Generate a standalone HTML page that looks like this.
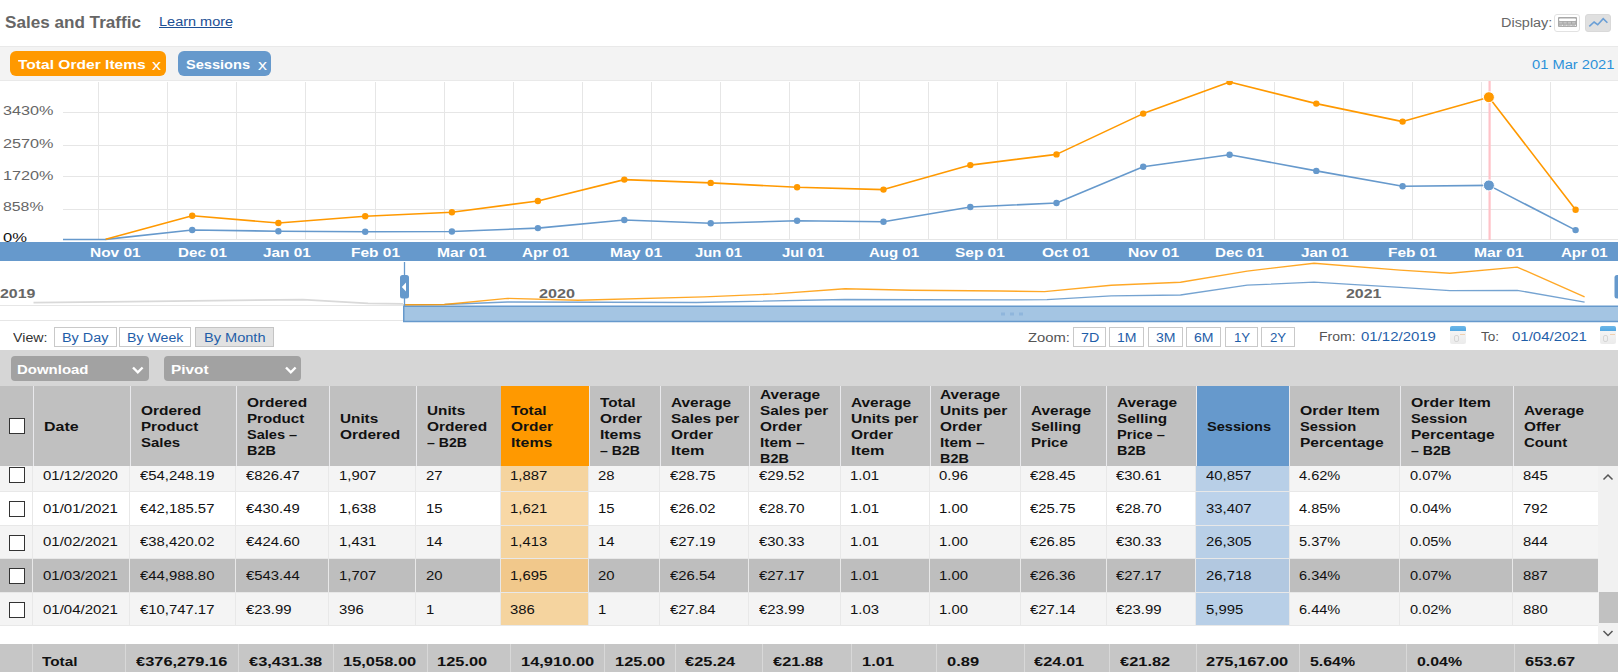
<!DOCTYPE html>
<html><head><meta charset="utf-8"><title>Sales and Traffic</title>
<style>
html,body{margin:0;padding:0;background:#fff;}
body{width:1618px;height:672px;position:relative;overflow:hidden;font-family:"Liberation Sans", sans-serif;}
.t span{position:absolute;white-space:pre;line-height:1;transform-origin:0 0;}
</style></head><body>
<div style="position:absolute;left:159px;top:27px;width:73px;height:1px;background:#1c4f94;"></div><div style="position:absolute;left:1554px;top:14px;width:24px;height:16px;border:1px solid #e2e2e2;border-radius:3px;background:#fff"></div><div style="position:absolute;left:1585px;top:14px;width:24px;height:16px;border:1px solid #d9d9d9;border-radius:3px;background:#e0e0e0"></div><div style="position:absolute;left:0px;top:46px;width:1618px;height:35px;background:#f3f3f3;border-top:1px solid #e9e9e9;border-bottom:1px solid #e9e9e9;box-sizing:border-box"></div><div style="position:absolute;left:10px;top:51px;width:156px;height:25px;background:#ff9900;border-radius:6px"></div><div style="position:absolute;left:178px;top:51px;width:93px;height:25px;background:#6699cc;border-radius:6px"></div><div style="position:absolute;left:0px;top:242px;width:1618px;height:19px;background:#6699cc;"></div><div style="position:absolute;left:54px;top:326.5px;width:60.5px;height:18px;border:1px solid #c9c9c9;background:#fff"></div><div style="position:absolute;left:119.2px;top:326.5px;width:70.3px;height:18px;border:1px solid #c9c9c9;background:#fff"></div><div style="position:absolute;left:195.2px;top:326.5px;width:76.5px;height:18px;border:1px solid #c4c4c4;background:#e2e2e2"></div><div style="position:absolute;left:1073px;top:326.5px;width:31.4px;height:18px;border:1px solid #c9c9c9;background:#fff"></div><div style="position:absolute;left:1109.2px;top:326.5px;width:33.2px;height:18px;border:1px solid #c9c9c9;background:#fff"></div><div style="position:absolute;left:1148.1px;top:326.5px;width:33.3px;height:18px;border:1px solid #c9c9c9;background:#fff"></div><div style="position:absolute;left:1186.2px;top:326.5px;width:33.2px;height:18px;border:1px solid #c9c9c9;background:#fff"></div><div style="position:absolute;left:1225.1px;top:326.5px;width:31.4px;height:18px;border:1px solid #c9c9c9;background:#fff"></div><div style="position:absolute;left:1261.3px;top:326.5px;width:31.3px;height:18px;border:1px solid #c9c9c9;background:#fff"></div><div style="position:absolute;left:1450px;top:326px;width:16px;height:17.5px;border-radius:2px;background:linear-gradient(#f8f8f8,#ebebeb)"></div><div style="position:absolute;left:1450px;top:326px;width:16px;height:5px;border-radius:2px 2px 0 0;background:linear-gradient(#6cb6e8,#52a8e2)"></div><div style="position:absolute;left:1453.5px;top:335px;width:3px;height:5px;border:1px solid #d6d6d6;border-radius:2px"></div><div style="position:absolute;left:1460px;top:334px;width:5px;height:1px;background:#f0d0b0"></div><div style="position:absolute;left:1599.7px;top:326px;width:16px;height:17.5px;border-radius:2px;background:linear-gradient(#f8f8f8,#ebebeb)"></div><div style="position:absolute;left:1599.7px;top:326px;width:16px;height:5px;border-radius:2px 2px 0 0;background:linear-gradient(#6cb6e8,#52a8e2)"></div><div style="position:absolute;left:1603.2px;top:335px;width:3px;height:5px;border:1px solid #d6d6d6;border-radius:2px"></div><div style="position:absolute;left:1609.7px;top:334px;width:5px;height:1px;background:#f0d0b0"></div><div style="position:absolute;left:0px;top:350px;width:1618px;height:36px;background:#d6d6d6;"></div><div style="position:absolute;left:11px;top:356px;width:138px;height:25px;background:#a2a2a2;border-radius:4px"></div><div style="position:absolute;left:164px;top:356px;width:137px;height:25px;background:#a2a2a2;border-radius:4px"></div><div style="position:absolute;left:0px;top:386px;width:1618px;height:80px;background:#c0c0c0;"></div><div style="position:absolute;left:33px;top:386px;width:1px;height:80px;background:#e9e9ec;"></div><div style="position:absolute;left:130px;top:386px;width:1px;height:80px;background:#e9e9ec;"></div><div style="position:absolute;left:236px;top:386px;width:1px;height:80px;background:#e9e9ec;"></div><div style="position:absolute;left:329px;top:386px;width:1px;height:80px;background:#e9e9ec;"></div><div style="position:absolute;left:416px;top:386px;width:1px;height:80px;background:#e9e9ec;"></div><div style="position:absolute;left:501px;top:386px;width:1px;height:80px;background:#e9e9ec;"></div><div style="position:absolute;left:589px;top:386px;width:1px;height:80px;background:#e9e9ec;"></div><div style="position:absolute;left:660px;top:386px;width:1px;height:80px;background:#e9e9ec;"></div><div style="position:absolute;left:749px;top:386px;width:1px;height:80px;background:#e9e9ec;"></div><div style="position:absolute;left:840px;top:386px;width:1px;height:80px;background:#e9e9ec;"></div><div style="position:absolute;left:930px;top:386px;width:1px;height:80px;background:#e9e9ec;"></div><div style="position:absolute;left:1020px;top:386px;width:1px;height:80px;background:#e9e9ec;"></div><div style="position:absolute;left:1106px;top:386px;width:1px;height:80px;background:#e9e9ec;"></div><div style="position:absolute;left:1196px;top:386px;width:1px;height:80px;background:#e9e9ec;"></div><div style="position:absolute;left:1289px;top:386px;width:1px;height:80px;background:#e9e9ec;"></div><div style="position:absolute;left:1400px;top:386px;width:1px;height:80px;background:#e9e9ec;"></div><div style="position:absolute;left:1513px;top:386px;width:1px;height:80px;background:#e9e9ec;"></div><div style="position:absolute;left:501px;top:386px;width:88px;height:80px;background:#ff9900;"></div><div style="position:absolute;left:1197px;top:386px;width:92px;height:80px;background:#6699cc;"></div><div style="position:absolute;left:9px;top:418px;width:14px;height:14px;border:1px solid #333;background:#fff"></div><div style="position:absolute;left:0px;top:466px;width:1598px;height:160px;background:#ffffff;"></div><div style="position:absolute;left:0px;top:466px;width:1598px;height:25px;background:#f4f4f4;"></div><div style="position:absolute;left:500px;top:466px;width:88px;height:25px;background:#f5d49f;"></div><div style="position:absolute;left:1196px;top:466px;width:93px;height:25px;background:#b8cfe7;"></div><div style="position:absolute;left:9px;top:467px;width:14px;height:14px;border:1px solid #333;background:#fff"></div><div style="position:absolute;left:0px;top:491px;width:1598px;height:34px;background:#ffffff;"></div><div style="position:absolute;left:500px;top:491px;width:88px;height:34px;background:#f8d8a6;"></div><div style="position:absolute;left:1196px;top:491px;width:93px;height:34px;background:#bcd2ea;"></div><div style="position:absolute;left:9px;top:501px;width:14px;height:14px;border:1px solid #333;background:#fff"></div><div style="position:absolute;left:0px;top:525px;width:1598px;height:33px;background:#f4f4f4;"></div><div style="position:absolute;left:500px;top:525px;width:88px;height:33px;background:#f5d49f;"></div><div style="position:absolute;left:1196px;top:525px;width:93px;height:33px;background:#b8cfe7;"></div><div style="position:absolute;left:9px;top:534.5px;width:14px;height:14px;border:1px solid #333;background:#fff"></div><div style="position:absolute;left:0px;top:558px;width:1598px;height:34px;background:#bebebe;"></div><div style="position:absolute;left:500px;top:558px;width:88px;height:34px;background:#f1c88b;"></div><div style="position:absolute;left:1196px;top:558px;width:93px;height:34px;background:#b2c8e0;"></div><div style="position:absolute;left:9px;top:568px;width:14px;height:14px;border:1px solid #333;background:#fff"></div><div style="position:absolute;left:0px;top:592px;width:1598px;height:33px;background:#f4f4f4;"></div><div style="position:absolute;left:500px;top:592px;width:88px;height:33px;background:#f5d49f;"></div><div style="position:absolute;left:1196px;top:592px;width:93px;height:33px;background:#b8cfe7;"></div><div style="position:absolute;left:9px;top:601.5px;width:14px;height:14px;border:1px solid #333;background:#fff"></div><div style="position:absolute;left:0px;top:491px;width:1598px;height:1px;background:#e8e8e8;"></div><div style="position:absolute;left:32px;top:466px;width:1px;height:25px;background:#e8e8e8;"></div><div style="position:absolute;left:129px;top:466px;width:1px;height:25px;background:#e8e8e8;"></div><div style="position:absolute;left:235px;top:466px;width:1px;height:25px;background:#e8e8e8;"></div><div style="position:absolute;left:328px;top:466px;width:1px;height:25px;background:#e8e8e8;"></div><div style="position:absolute;left:415px;top:466px;width:1px;height:25px;background:#e8e8e8;"></div><div style="position:absolute;left:500px;top:466px;width:1px;height:25px;background:#e8e8e8;"></div><div style="position:absolute;left:588px;top:466px;width:1px;height:25px;background:#e8e8e8;"></div><div style="position:absolute;left:659px;top:466px;width:1px;height:25px;background:#e8e8e8;"></div><div style="position:absolute;left:748px;top:466px;width:1px;height:25px;background:#e8e8e8;"></div><div style="position:absolute;left:840px;top:466px;width:1px;height:25px;background:#e8e8e8;"></div><div style="position:absolute;left:929px;top:466px;width:1px;height:25px;background:#e8e8e8;"></div><div style="position:absolute;left:1020px;top:466px;width:1px;height:25px;background:#e8e8e8;"></div><div style="position:absolute;left:1106px;top:466px;width:1px;height:25px;background:#e8e8e8;"></div><div style="position:absolute;left:1195px;top:466px;width:1px;height:25px;background:#e8e8e8;"></div><div style="position:absolute;left:1289px;top:466px;width:1px;height:25px;background:#e8e8e8;"></div><div style="position:absolute;left:1399px;top:466px;width:1px;height:25px;background:#e8e8e8;"></div><div style="position:absolute;left:1512px;top:466px;width:1px;height:25px;background:#e8e8e8;"></div><div style="position:absolute;left:0px;top:525px;width:1598px;height:1px;background:#e8e8e8;"></div><div style="position:absolute;left:32px;top:491px;width:1px;height:34px;background:#e8e8e8;"></div><div style="position:absolute;left:129px;top:491px;width:1px;height:34px;background:#e8e8e8;"></div><div style="position:absolute;left:235px;top:491px;width:1px;height:34px;background:#e8e8e8;"></div><div style="position:absolute;left:328px;top:491px;width:1px;height:34px;background:#e8e8e8;"></div><div style="position:absolute;left:415px;top:491px;width:1px;height:34px;background:#e8e8e8;"></div><div style="position:absolute;left:500px;top:491px;width:1px;height:34px;background:#e8e8e8;"></div><div style="position:absolute;left:588px;top:491px;width:1px;height:34px;background:#e8e8e8;"></div><div style="position:absolute;left:659px;top:491px;width:1px;height:34px;background:#e8e8e8;"></div><div style="position:absolute;left:748px;top:491px;width:1px;height:34px;background:#e8e8e8;"></div><div style="position:absolute;left:840px;top:491px;width:1px;height:34px;background:#e8e8e8;"></div><div style="position:absolute;left:929px;top:491px;width:1px;height:34px;background:#e8e8e8;"></div><div style="position:absolute;left:1020px;top:491px;width:1px;height:34px;background:#e8e8e8;"></div><div style="position:absolute;left:1106px;top:491px;width:1px;height:34px;background:#e8e8e8;"></div><div style="position:absolute;left:1195px;top:491px;width:1px;height:34px;background:#e8e8e8;"></div><div style="position:absolute;left:1289px;top:491px;width:1px;height:34px;background:#e8e8e8;"></div><div style="position:absolute;left:1399px;top:491px;width:1px;height:34px;background:#e8e8e8;"></div><div style="position:absolute;left:1512px;top:491px;width:1px;height:34px;background:#e8e8e8;"></div><div style="position:absolute;left:0px;top:558px;width:1598px;height:1px;background:#e8e8e8;"></div><div style="position:absolute;left:32px;top:525px;width:1px;height:33px;background:#e8e8e8;"></div><div style="position:absolute;left:129px;top:525px;width:1px;height:33px;background:#e8e8e8;"></div><div style="position:absolute;left:235px;top:525px;width:1px;height:33px;background:#e8e8e8;"></div><div style="position:absolute;left:328px;top:525px;width:1px;height:33px;background:#e8e8e8;"></div><div style="position:absolute;left:415px;top:525px;width:1px;height:33px;background:#e8e8e8;"></div><div style="position:absolute;left:500px;top:525px;width:1px;height:33px;background:#e8e8e8;"></div><div style="position:absolute;left:588px;top:525px;width:1px;height:33px;background:#e8e8e8;"></div><div style="position:absolute;left:659px;top:525px;width:1px;height:33px;background:#e8e8e8;"></div><div style="position:absolute;left:748px;top:525px;width:1px;height:33px;background:#e8e8e8;"></div><div style="position:absolute;left:840px;top:525px;width:1px;height:33px;background:#e8e8e8;"></div><div style="position:absolute;left:929px;top:525px;width:1px;height:33px;background:#e8e8e8;"></div><div style="position:absolute;left:1020px;top:525px;width:1px;height:33px;background:#e8e8e8;"></div><div style="position:absolute;left:1106px;top:525px;width:1px;height:33px;background:#e8e8e8;"></div><div style="position:absolute;left:1195px;top:525px;width:1px;height:33px;background:#e8e8e8;"></div><div style="position:absolute;left:1289px;top:525px;width:1px;height:33px;background:#e8e8e8;"></div><div style="position:absolute;left:1399px;top:525px;width:1px;height:33px;background:#e8e8e8;"></div><div style="position:absolute;left:1512px;top:525px;width:1px;height:33px;background:#e8e8e8;"></div><div style="position:absolute;left:0px;top:592px;width:1598px;height:1px;background:#e8e8e8;"></div><div style="position:absolute;left:32px;top:558px;width:1px;height:34px;background:#e8e8e8;"></div><div style="position:absolute;left:129px;top:558px;width:1px;height:34px;background:#e8e8e8;"></div><div style="position:absolute;left:235px;top:558px;width:1px;height:34px;background:#e8e8e8;"></div><div style="position:absolute;left:328px;top:558px;width:1px;height:34px;background:#e8e8e8;"></div><div style="position:absolute;left:415px;top:558px;width:1px;height:34px;background:#e8e8e8;"></div><div style="position:absolute;left:500px;top:558px;width:1px;height:34px;background:#e8e8e8;"></div><div style="position:absolute;left:588px;top:558px;width:1px;height:34px;background:#e8e8e8;"></div><div style="position:absolute;left:659px;top:558px;width:1px;height:34px;background:#e8e8e8;"></div><div style="position:absolute;left:748px;top:558px;width:1px;height:34px;background:#e8e8e8;"></div><div style="position:absolute;left:840px;top:558px;width:1px;height:34px;background:#e8e8e8;"></div><div style="position:absolute;left:929px;top:558px;width:1px;height:34px;background:#e8e8e8;"></div><div style="position:absolute;left:1020px;top:558px;width:1px;height:34px;background:#e8e8e8;"></div><div style="position:absolute;left:1106px;top:558px;width:1px;height:34px;background:#e8e8e8;"></div><div style="position:absolute;left:1195px;top:558px;width:1px;height:34px;background:#e8e8e8;"></div><div style="position:absolute;left:1289px;top:558px;width:1px;height:34px;background:#e8e8e8;"></div><div style="position:absolute;left:1399px;top:558px;width:1px;height:34px;background:#e8e8e8;"></div><div style="position:absolute;left:1512px;top:558px;width:1px;height:34px;background:#e8e8e8;"></div><div style="position:absolute;left:0px;top:625px;width:1598px;height:1px;background:#e8e8e8;"></div><div style="position:absolute;left:32px;top:592px;width:1px;height:33px;background:#e8e8e8;"></div><div style="position:absolute;left:129px;top:592px;width:1px;height:33px;background:#e8e8e8;"></div><div style="position:absolute;left:235px;top:592px;width:1px;height:33px;background:#e8e8e8;"></div><div style="position:absolute;left:328px;top:592px;width:1px;height:33px;background:#e8e8e8;"></div><div style="position:absolute;left:415px;top:592px;width:1px;height:33px;background:#e8e8e8;"></div><div style="position:absolute;left:500px;top:592px;width:1px;height:33px;background:#e8e8e8;"></div><div style="position:absolute;left:588px;top:592px;width:1px;height:33px;background:#e8e8e8;"></div><div style="position:absolute;left:659px;top:592px;width:1px;height:33px;background:#e8e8e8;"></div><div style="position:absolute;left:748px;top:592px;width:1px;height:33px;background:#e8e8e8;"></div><div style="position:absolute;left:840px;top:592px;width:1px;height:33px;background:#e8e8e8;"></div><div style="position:absolute;left:929px;top:592px;width:1px;height:33px;background:#e8e8e8;"></div><div style="position:absolute;left:1020px;top:592px;width:1px;height:33px;background:#e8e8e8;"></div><div style="position:absolute;left:1106px;top:592px;width:1px;height:33px;background:#e8e8e8;"></div><div style="position:absolute;left:1195px;top:592px;width:1px;height:33px;background:#e8e8e8;"></div><div style="position:absolute;left:1289px;top:592px;width:1px;height:33px;background:#e8e8e8;"></div><div style="position:absolute;left:1399px;top:592px;width:1px;height:33px;background:#e8e8e8;"></div><div style="position:absolute;left:1512px;top:592px;width:1px;height:33px;background:#e8e8e8;"></div><div style="position:absolute;left:1598px;top:466px;width:20px;height:178px;background:#f1f1f1;"></div><div style="position:absolute;left:1599px;top:592px;width:19px;height:31px;background:#c1c1c1;"></div><div style="position:absolute;left:0px;top:644px;width:1618px;height:28px;background:#c6c6c6;"></div><div style="position:absolute;left:32px;top:644px;width:1px;height:28px;background:#d8d8d8;"></div><div style="position:absolute;left:125px;top:644px;width:1px;height:28px;background:#d8d8d8;"></div><div style="position:absolute;left:238px;top:644px;width:1px;height:28px;background:#d8d8d8;"></div><div style="position:absolute;left:333px;top:644px;width:1px;height:28px;background:#d8d8d8;"></div><div style="position:absolute;left:427px;top:644px;width:1px;height:28px;background:#d8d8d8;"></div><div style="position:absolute;left:510px;top:644px;width:1px;height:28px;background:#d8d8d8;"></div><div style="position:absolute;left:604px;top:644px;width:1px;height:28px;background:#d8d8d8;"></div><div style="position:absolute;left:675px;top:644px;width:1px;height:28px;background:#d8d8d8;"></div><div style="position:absolute;left:762px;top:644px;width:1px;height:28px;background:#d8d8d8;"></div><div style="position:absolute;left:851px;top:644px;width:1px;height:28px;background:#d8d8d8;"></div><div style="position:absolute;left:936px;top:644px;width:1px;height:28px;background:#d8d8d8;"></div><div style="position:absolute;left:1024px;top:644px;width:1px;height:28px;background:#d8d8d8;"></div><div style="position:absolute;left:1109px;top:644px;width:1px;height:28px;background:#d8d8d8;"></div><div style="position:absolute;left:1196px;top:644px;width:1px;height:28px;background:#d8d8d8;"></div><div style="position:absolute;left:1299px;top:644px;width:1px;height:28px;background:#d8d8d8;"></div><div style="position:absolute;left:1406px;top:644px;width:1px;height:28px;background:#d8d8d8;"></div><div style="position:absolute;left:1514px;top:644px;width:1px;height:28px;background:#d8d8d8;"></div>
<svg style="position:absolute;left:0;top:0" width="1618" height="672">
<rect x="1558" y="17" width="19" height="10" fill="#a8a8a8" rx="1"/><rect x="1559" y="18.5" width="17" height="2.5" fill="#fff" rx="1"/><rect x="1559.2" y="21.8" width="3.2" height="1.8" fill="#c4c4c4"/><rect x="1559.2" y="24.6" width="3.2" height="1.6" fill="#c4c4c4"/><rect x="1562.1" y="24.8" width="1" height="1" fill="#fff"/><rect x="1563.5" y="21.8" width="3.2" height="1.8" fill="#c4c4c4"/><rect x="1563.5" y="24.6" width="3.2" height="1.6" fill="#c4c4c4"/><rect x="1566.4" y="24.8" width="1" height="1" fill="#fff"/><rect x="1567.8" y="21.8" width="3.2" height="1.8" fill="#c4c4c4"/><rect x="1567.8" y="24.6" width="3.2" height="1.6" fill="#c4c4c4"/><rect x="1570.7" y="24.8" width="1" height="1" fill="#fff"/><rect x="1572.1" y="21.8" width="3.2" height="1.8" fill="#c4c4c4"/><rect x="1572.1" y="24.6" width="3.2" height="1.6" fill="#c4c4c4"/><rect x="1575.0" y="24.8" width="1" height="1" fill="#fff"/><polyline points="1589.3,26.4 1594.1,22 1597.7,24.7 1603.2,18.6 1607.4,22.8" fill="none" stroke="#6a9fd6" stroke-width="1.6"/><line x1="63" y1="112.5" x2="1618" y2="112.5" stroke="#e6e6e6" stroke-width="1"/><line x1="63" y1="145.5" x2="1618" y2="145.5" stroke="#e6e6e6" stroke-width="1"/><line x1="63" y1="176.5" x2="1618" y2="176.5" stroke="#e6e6e6" stroke-width="1"/><line x1="63" y1="209.5" x2="1618" y2="209.5" stroke="#e6e6e6" stroke-width="1"/><line x1="63" y1="239.5" x2="1618" y2="239.5" stroke="#e6e6e6" stroke-width="1"/><line x1="98.5" y1="82" x2="98.5" y2="240" stroke="#e6e6e6" stroke-width="1"/><line x1="167.5" y1="82" x2="167.5" y2="240" stroke="#e6e6e6" stroke-width="1"/><line x1="236.5" y1="82" x2="236.5" y2="240" stroke="#e6e6e6" stroke-width="1"/><line x1="305.5" y1="82" x2="305.5" y2="240" stroke="#e6e6e6" stroke-width="1"/><line x1="375.5" y1="82" x2="375.5" y2="240" stroke="#e6e6e6" stroke-width="1"/><line x1="444.5" y1="82" x2="444.5" y2="240" stroke="#e6e6e6" stroke-width="1"/><line x1="513.5" y1="82" x2="513.5" y2="240" stroke="#e6e6e6" stroke-width="1"/><line x1="582.5" y1="82" x2="582.5" y2="240" stroke="#e6e6e6" stroke-width="1"/><line x1="651.5" y1="82" x2="651.5" y2="240" stroke="#e6e6e6" stroke-width="1"/><line x1="720.5" y1="82" x2="720.5" y2="240" stroke="#e6e6e6" stroke-width="1"/><line x1="789.5" y1="82" x2="789.5" y2="240" stroke="#e6e6e6" stroke-width="1"/><line x1="859.5" y1="82" x2="859.5" y2="240" stroke="#e6e6e6" stroke-width="1"/><line x1="928.5" y1="82" x2="928.5" y2="240" stroke="#e6e6e6" stroke-width="1"/><line x1="997.5" y1="82" x2="997.5" y2="240" stroke="#e6e6e6" stroke-width="1"/><line x1="1066.5" y1="82" x2="1066.5" y2="240" stroke="#e6e6e6" stroke-width="1"/><line x1="1135.5" y1="82" x2="1135.5" y2="240" stroke="#e6e6e6" stroke-width="1"/><line x1="1204.5" y1="82" x2="1204.5" y2="240" stroke="#e6e6e6" stroke-width="1"/><line x1="1274.5" y1="82" x2="1274.5" y2="240" stroke="#e6e6e6" stroke-width="1"/><line x1="1343.5" y1="82" x2="1343.5" y2="240" stroke="#e6e6e6" stroke-width="1"/><line x1="1412.5" y1="82" x2="1412.5" y2="240" stroke="#e6e6e6" stroke-width="1"/><line x1="1481.5" y1="82" x2="1481.5" y2="240" stroke="#e6e6e6" stroke-width="1"/><line x1="1550.5" y1="82" x2="1550.5" y2="240" stroke="#e6e6e6" stroke-width="1"/><rect x="1488.5" y="81" width="2.2" height="159" fill="#ffc2c8"/><defs><clipPath id="plot"><rect x="0" y="81" width="1618" height="161"/></clipPath></defs><g clip-path="url(#plot)"><line x1="63" y1="239.5" x2="106" y2="239.5" stroke="#6699cc" stroke-width="1.6"/><polyline points="105.7,239.4 192.2,230.0 278.4,231.2 365.2,231.8 451.9,231.5 537.9,228.1 624.3,220 710.7,223.3 797.1,220.7 883.5,221.8 970.3,207 1056.5,203 1143.2,166.7 1229.6,154.8 1316.3,170.9 1402.6,186.2 1488.9,185.4 1575.6,230.1" fill="none" stroke="#6699cc" stroke-width="1.6" stroke-linejoin="round"/><polyline points="105.7,239.2 192.2,215.7 278.4,223 365.2,216.3 451.9,212.2 537.9,201 624.3,179.6 710.7,182.9 797.1,187.3 883.5,189.6 970.3,165.1 1056.5,154.4 1143.2,113.6 1229.6,82.0 1316.3,103.6 1402.6,121.6 1488.9,97.2 1575.6,209.8" fill="none" stroke="#ff9900" stroke-width="1.6" stroke-linejoin="round"/><circle cx="192.2" cy="230.0" r="3.2" fill="#6699cc"/><circle cx="278.4" cy="231.2" r="3.2" fill="#6699cc"/><circle cx="365.2" cy="231.8" r="3.2" fill="#6699cc"/><circle cx="451.9" cy="231.5" r="3.2" fill="#6699cc"/><circle cx="537.9" cy="228.1" r="3.2" fill="#6699cc"/><circle cx="624.3" cy="220" r="3.2" fill="#6699cc"/><circle cx="710.7" cy="223.3" r="3.2" fill="#6699cc"/><circle cx="797.1" cy="220.7" r="3.2" fill="#6699cc"/><circle cx="883.5" cy="221.8" r="3.2" fill="#6699cc"/><circle cx="970.3" cy="207" r="3.2" fill="#6699cc"/><circle cx="1056.5" cy="203" r="3.2" fill="#6699cc"/><circle cx="1143.2" cy="166.7" r="3.2" fill="#6699cc"/><circle cx="1229.6" cy="154.8" r="3.2" fill="#6699cc"/><circle cx="1316.3" cy="170.9" r="3.2" fill="#6699cc"/><circle cx="1402.6" cy="186.2" r="3.2" fill="#6699cc"/><circle cx="1488.9" cy="185.4" r="5.5" fill="#6699cc" stroke="#fff" stroke-width="1"/><circle cx="1575.6" cy="230.1" r="3.2" fill="#6699cc"/><circle cx="192.2" cy="215.7" r="3.2" fill="#ff9900"/><circle cx="278.4" cy="223" r="3.2" fill="#ff9900"/><circle cx="365.2" cy="216.3" r="3.2" fill="#ff9900"/><circle cx="451.9" cy="212.2" r="3.2" fill="#ff9900"/><circle cx="537.9" cy="201" r="3.2" fill="#ff9900"/><circle cx="624.3" cy="179.6" r="3.2" fill="#ff9900"/><circle cx="710.7" cy="182.9" r="3.2" fill="#ff9900"/><circle cx="797.1" cy="187.3" r="3.2" fill="#ff9900"/><circle cx="883.5" cy="189.6" r="3.2" fill="#ff9900"/><circle cx="970.3" cy="165.1" r="3.2" fill="#ff9900"/><circle cx="1056.5" cy="154.4" r="3.2" fill="#ff9900"/><circle cx="1143.2" cy="113.6" r="3.2" fill="#ff9900"/><circle cx="1229.6" cy="82.0" r="3.2" fill="#ff9900"/><circle cx="1316.3" cy="103.6" r="3.2" fill="#ff9900"/><circle cx="1402.6" cy="121.6" r="3.2" fill="#ff9900"/><circle cx="1488.9" cy="97.2" r="5.5" fill="#ff9900" stroke="#fff" stroke-width="1"/><circle cx="1575.6" cy="209.8" r="3.2" fill="#ff9900"/></g><line x1="0" y1="305.5" x2="403" y2="305.5" stroke="#e6e6e6" stroke-width="1"/><line x1="0" y1="320.5" x2="403" y2="320.5" stroke="#e6e6e6" stroke-width="1"/><polyline points="33.5,302.7 130,301.6 303,299.6 368,303.4 403,303.8" fill="none" stroke="#d9d9d9" stroke-width="1.8"/><rect x="403.75" y="306.25" width="1216" height="15.25" fill="#a4c5e3" stroke="#6699cc" stroke-width="1.5"/><rect x="1001" y="312.5" width="4" height="3" fill="#8fb6dc"/><rect x="1010" y="312.5" width="4" height="3" fill="#8fb6dc"/><rect x="1019" y="312.5" width="4" height="3" fill="#8fb6dc"/><polyline points="403.7,304.8 444.5,304.5 507.5,302 696.6,302.5 845,299.5 1000,299.9 1047,299.7 1111.2,295.8 1180.5,295 1247.2,285.2 1314,282.2 1400,287.3 1449.9,290.7 1517.2,290.3 1584.6,302.2" fill="none" stroke="#6699cc" stroke-width="1.3" stroke-opacity="0.9"/><polyline points="403.7,304.8 444.5,304.5 507.5,298.4 578,300.2 704,296.9 774.5,293.9 845,288.7 911.7,290.2 1000,291 1044.5,291.6 1111.2,285.2 1180.5,282.2 1247.2,271.1 1314,263.2 1400,270.1 1449.9,273.2 1517.2,267.1 1584.6,296.8" fill="none" stroke="#ff9900" stroke-width="1.4" stroke-opacity="0.85"/><line x1="404.5" y1="262" x2="404.5" y2="306" stroke="#6699cc" stroke-width="1.3"/><rect x="400" y="275" width="9" height="23.5" rx="2.5" fill="#6699cc"/><polygon points="401.8,287 406,282.5 406,291.5" fill="#fff"/><rect x="1614.5" y="275" width="9" height="23.5" rx="2.5" fill="#6699cc"/><polyline points="133,367.5 137.8,372.3 142.6,367.5" fill="none" stroke="#fff" stroke-width="2.4"/><polyline points="286,367.5 290.8,372.3 295.6,367.5" fill="none" stroke="#fff" stroke-width="2.4"/><polyline points="1603.5,479.5 1608,475 1612.5,479.5" fill="none" stroke="#555" stroke-width="1.5"/><polyline points="1603.5,631 1608,635.5 1612.5,631" fill="none" stroke="#555" stroke-width="1.5"/>
</svg>
<div class="t">
<span style="left:5.0px;top:15.3px;font-size:15.60px;font-weight:bold;color:#666;transform:scaleX(1.097);">Sales and Traffic</span><span style="left:159.0px;top:15.1px;font-size:13.52px;color:#1c4f94;transform:scaleX(1.073);">Learn more</span><span style="left:1501.0px;top:16.1px;font-size:13.52px;color:#666;transform:scaleX(1.068);">Display:</span><span style="left:18.0px;top:58.1px;font-size:13.52px;font-weight:bold;color:#fff;transform:scaleX(1.152);">Total Order Items</span><span style="left:152.3px;top:58.2px;font-size:14.56px;color:#fff;transform:scaleX(1.236);">x</span><span style="left:186.0px;top:58.1px;font-size:13.52px;font-weight:bold;color:#fff;transform:scaleX(1.079);">Sessions</span><span style="left:257.5px;top:58.2px;font-size:14.56px;color:#fff;transform:scaleX(1.236);">x</span><span style="left:1532.0px;top:58.1px;font-size:13.52px;color:#2b91d9;transform:scaleX(1.086);">01 Mar 2021</span><span style="left:3.0px;top:104.1px;font-size:13.52px;color:#666;transform:scaleX(1.200);">3430%</span><span style="left:3.0px;top:136.6px;font-size:13.52px;color:#666;transform:scaleX(1.200);">2570%</span><span style="left:3.0px;top:168.6px;font-size:13.52px;color:#666;transform:scaleX(1.200);">1720%</span><span style="left:3.0px;top:200.1px;font-size:13.52px;color:#666;transform:scaleX(1.171);">858%</span><span style="left:3.0px;top:230.6px;font-size:13.52px;color:#111;transform:scaleX(1.228);">0%</span><span style="left:90.4px;top:245.8px;font-size:13.00px;font-weight:bold;color:#fff;transform:scaleX(1.189);">Nov 01</span><span style="left:177.8px;top:245.8px;font-size:13.00px;font-weight:bold;color:#fff;transform:scaleX(1.169);">Dec 01</span><span style="left:263.4px;top:245.8px;font-size:13.00px;font-weight:bold;color:#fff;transform:scaleX(1.178);">Jan 01</span><span style="left:350.9px;top:245.8px;font-size:13.00px;font-weight:bold;color:#fff;transform:scaleX(1.190);">Feb 01</span><span style="left:436.6px;top:245.8px;font-size:13.00px;font-weight:bold;color:#fff;transform:scaleX(1.201);">Mar 01</span><span style="left:522.2px;top:245.8px;font-size:13.00px;font-weight:bold;color:#fff;transform:scaleX(1.169);">Apr 01</span><span style="left:609.7px;top:245.8px;font-size:13.00px;font-weight:bold;color:#fff;transform:scaleX(1.201);">May 01</span><span style="left:695.4px;top:245.8px;font-size:13.00px;font-weight:bold;color:#fff;transform:scaleX(1.141);">Jun 01</span><span style="left:782.1px;top:245.8px;font-size:13.00px;font-weight:bold;color:#fff;transform:scaleX(1.145);">Jul 01</span><span style="left:868.5px;top:245.8px;font-size:13.00px;font-weight:bold;color:#fff;transform:scaleX(1.154);">Aug 01</span><span style="left:955.0px;top:245.8px;font-size:13.00px;font-weight:bold;color:#fff;transform:scaleX(1.188);">Sep 01</span><span style="left:1041.5px;top:245.8px;font-size:13.00px;font-weight:bold;color:#fff;transform:scaleX(1.197);">Oct 01</span><span style="left:1128.0px;top:245.8px;font-size:13.00px;font-weight:bold;color:#fff;transform:scaleX(1.201);">Nov 01</span><span style="left:1214.5px;top:245.8px;font-size:13.00px;font-weight:bold;color:#fff;transform:scaleX(1.169);">Dec 01</span><span style="left:1301.1px;top:245.8px;font-size:13.00px;font-weight:bold;color:#fff;transform:scaleX(1.176);">Jan 01</span><span style="left:1387.5px;top:245.8px;font-size:13.00px;font-weight:bold;color:#fff;transform:scaleX(1.187);">Feb 01</span><span style="left:1474.2px;top:245.8px;font-size:13.00px;font-weight:bold;color:#fff;transform:scaleX(1.209);">Mar 01</span><span style="left:1560.7px;top:245.8px;font-size:13.00px;font-weight:bold;color:#fff;transform:scaleX(1.154);">Apr 01</span><span style="left:0.0px;top:287.1px;font-size:13.52px;font-weight:bold;color:#666;transform:scaleX(1.180);">2019</span><span style="left:538.5px;top:287.1px;font-size:13.52px;font-weight:bold;color:#666;transform:scaleX(1.197);">2020</span><span style="left:1345.5px;top:287.4px;font-size:13.52px;font-weight:bold;color:#666;transform:scaleX(1.180);">2021</span><span style="left:13.0px;top:330.6px;font-size:13.52px;color:#333;transform:scaleX(1.052);">View:</span><span style="left:62.0px;top:331.1px;font-size:13.52px;color:#1f5ea8;transform:scaleX(1.065);">By Day</span><span style="left:127.2px;top:331.1px;font-size:13.52px;color:#1f5ea8;transform:scaleX(1.047);">By Week</span><span style="left:203.7px;top:331.1px;font-size:13.52px;color:#1f5ea8;transform:scaleX(1.077);">By Month</span><span style="left:1027.5px;top:330.6px;font-size:13.52px;color:#555;transform:scaleX(1.093);">Zoom:</span><span style="left:1080.6px;top:331.1px;font-size:13.52px;color:#1f5ea8;transform:scaleX(1.058);">7D</span><span style="left:1117.1px;top:331.1px;font-size:13.52px;color:#1f5ea8;transform:scaleX(1.038);">1M</span><span style="left:1156.0px;top:331.1px;font-size:13.52px;color:#1f5ea8;transform:scaleX(1.038);">3M</span><span style="left:1194.1px;top:331.1px;font-size:13.52px;color:#1f5ea8;transform:scaleX(1.038);">6M</span><span style="left:1233.7px;top:331.1px;font-size:13.52px;color:#1f5ea8;transform:scaleX(0.980);">1Y</span><span style="left:1269.8px;top:331.1px;font-size:13.52px;color:#1f5ea8;transform:scaleX(0.980);">2Y</span><span style="left:1319.0px;top:329.8px;font-size:13.52px;color:#555;transform:scaleX(1.037);">From:</span><span style="left:1361.0px;top:329.8px;font-size:13.52px;color:#1f5ea8;transform:scaleX(1.108);">01/12/2019</span><span style="left:1481.0px;top:329.8px;font-size:13.52px;color:#555;transform:scaleX(1.003);">To:</span><span style="left:1512.0px;top:329.8px;font-size:13.52px;color:#1f5ea8;transform:scaleX(1.108);">01/04/2021</span><span style="left:16.5px;top:363.2px;font-size:13.52px;font-weight:bold;color:#fff;transform:scaleX(1.107);">Download</span><span style="left:170.5px;top:363.2px;font-size:13.52px;font-weight:bold;color:#fff;transform:scaleX(1.138);">Pivot</span><span style="left:43.5px;top:420.3px;font-size:13.52px;font-weight:bold;color:#111;transform:scaleX(1.181);">Date</span><span style="left:140.9px;top:404.3px;font-size:13.52px;font-weight:bold;color:#111;transform:scaleX(1.144);">Ordered</span><span style="left:140.9px;top:420.3px;font-size:13.52px;font-weight:bold;color:#111;transform:scaleX(1.123);">Product</span><span style="left:140.9px;top:436.3px;font-size:13.52px;font-weight:bold;color:#111;transform:scaleX(1.108);">Sales</span><span style="left:246.9px;top:396.3px;font-size:13.52px;font-weight:bold;color:#111;transform:scaleX(1.144);">Ordered</span><span style="left:246.9px;top:412.3px;font-size:13.52px;font-weight:bold;color:#111;transform:scaleX(1.123);">Product</span><span style="left:246.9px;top:428.3px;font-size:13.52px;font-weight:bold;color:#111;transform:scaleX(1.077);">Sales –</span><span style="left:246.9px;top:444.3px;font-size:13.52px;font-weight:bold;color:#111;transform:scaleX(1.068);">B2B</span><span style="left:339.8px;top:412.3px;font-size:13.52px;font-weight:bold;color:#111;transform:scaleX(1.131);">Units</span><span style="left:339.8px;top:428.3px;font-size:13.52px;font-weight:bold;color:#111;transform:scaleX(1.144);">Ordered</span><span style="left:427.0px;top:404.3px;font-size:13.52px;font-weight:bold;color:#111;transform:scaleX(1.131);">Units</span><span style="left:427.0px;top:420.3px;font-size:13.52px;font-weight:bold;color:#111;transform:scaleX(1.144);">Ordered</span><span style="left:427.0px;top:436.3px;font-size:13.52px;font-weight:bold;color:#111;transform:scaleX(1.041);">– B2B</span><span style="left:511.1px;top:404.3px;font-size:13.52px;font-weight:bold;color:#111;transform:scaleX(1.135);">Total</span><span style="left:511.1px;top:420.3px;font-size:13.52px;font-weight:bold;color:#111;transform:scaleX(1.141);">Order</span><span style="left:511.1px;top:436.3px;font-size:13.52px;font-weight:bold;color:#111;transform:scaleX(1.165);">Items</span><span style="left:599.6px;top:396.3px;font-size:13.52px;font-weight:bold;color:#111;transform:scaleX(1.135);">Total</span><span style="left:599.6px;top:412.3px;font-size:13.52px;font-weight:bold;color:#111;transform:scaleX(1.141);">Order</span><span style="left:599.6px;top:428.3px;font-size:13.52px;font-weight:bold;color:#111;transform:scaleX(1.165);">Items</span><span style="left:599.6px;top:444.3px;font-size:13.52px;font-weight:bold;color:#111;transform:scaleX(1.041);">– B2B</span><span style="left:670.8px;top:396.3px;font-size:13.52px;font-weight:bold;color:#111;transform:scaleX(1.139);">Average</span><span style="left:670.8px;top:412.3px;font-size:13.52px;font-weight:bold;color:#111;transform:scaleX(1.135);">Sales per</span><span style="left:670.8px;top:428.3px;font-size:13.52px;font-weight:bold;color:#111;transform:scaleX(1.141);">Order</span><span style="left:670.8px;top:444.3px;font-size:13.52px;font-weight:bold;color:#111;transform:scaleX(1.202);">Item</span><span style="left:759.8px;top:388.3px;font-size:13.52px;font-weight:bold;color:#111;transform:scaleX(1.139);">Average</span><span style="left:759.8px;top:404.3px;font-size:13.52px;font-weight:bold;color:#111;transform:scaleX(1.135);">Sales per</span><span style="left:759.8px;top:420.3px;font-size:13.52px;font-weight:bold;color:#111;transform:scaleX(1.141);">Order</span><span style="left:759.8px;top:436.3px;font-size:13.52px;font-weight:bold;color:#111;transform:scaleX(1.138);">Item –</span><span style="left:759.8px;top:452.3px;font-size:13.52px;font-weight:bold;color:#111;transform:scaleX(1.068);">B2B</span><span style="left:850.8px;top:396.3px;font-size:13.52px;font-weight:bold;color:#111;transform:scaleX(1.139);">Average</span><span style="left:850.8px;top:412.3px;font-size:13.52px;font-weight:bold;color:#111;transform:scaleX(1.149);">Units per</span><span style="left:850.8px;top:428.3px;font-size:13.52px;font-weight:bold;color:#111;transform:scaleX(1.141);">Order</span><span style="left:850.8px;top:444.3px;font-size:13.52px;font-weight:bold;color:#111;transform:scaleX(1.202);">Item</span><span style="left:940.0px;top:388.3px;font-size:13.52px;font-weight:bold;color:#111;transform:scaleX(1.139);">Average</span><span style="left:940.0px;top:404.3px;font-size:13.52px;font-weight:bold;color:#111;transform:scaleX(1.149);">Units per</span><span style="left:940.0px;top:420.3px;font-size:13.52px;font-weight:bold;color:#111;transform:scaleX(1.141);">Order</span><span style="left:940.0px;top:436.3px;font-size:13.52px;font-weight:bold;color:#111;transform:scaleX(1.138);">Item –</span><span style="left:940.0px;top:452.3px;font-size:13.52px;font-weight:bold;color:#111;transform:scaleX(1.068);">B2B</span><span style="left:1030.9px;top:404.3px;font-size:13.52px;font-weight:bold;color:#111;transform:scaleX(1.139);">Average</span><span style="left:1030.9px;top:420.3px;font-size:13.52px;font-weight:bold;color:#111;transform:scaleX(1.131);">Selling</span><span style="left:1030.9px;top:436.3px;font-size:13.52px;font-weight:bold;color:#111;transform:scaleX(1.116);">Price</span><span style="left:1116.9px;top:396.3px;font-size:13.52px;font-weight:bold;color:#111;transform:scaleX(1.139);">Average</span><span style="left:1116.9px;top:412.3px;font-size:13.52px;font-weight:bold;color:#111;transform:scaleX(1.131);">Selling</span><span style="left:1116.9px;top:428.3px;font-size:13.52px;font-weight:bold;color:#111;transform:scaleX(1.081);">Price –</span><span style="left:1116.9px;top:444.3px;font-size:13.52px;font-weight:bold;color:#111;transform:scaleX(1.068);">B2B</span><span style="left:1206.5px;top:420.3px;font-size:13.52px;font-weight:bold;color:#111;transform:scaleX(1.079);">Sessions</span><span style="left:1299.8px;top:404.3px;font-size:13.52px;font-weight:bold;color:#111;transform:scaleX(1.169);">Order Item</span><span style="left:1299.8px;top:420.3px;font-size:13.52px;font-weight:bold;color:#111;transform:scaleX(1.086);">Session</span><span style="left:1299.8px;top:436.3px;font-size:13.52px;font-weight:bold;color:#111;transform:scaleX(1.148);">Percentage</span><span style="left:1411.0px;top:396.3px;font-size:13.52px;font-weight:bold;color:#111;transform:scaleX(1.169);">Order Item</span><span style="left:1411.0px;top:412.3px;font-size:13.52px;font-weight:bold;color:#111;transform:scaleX(1.086);">Session</span><span style="left:1411.0px;top:428.3px;font-size:13.52px;font-weight:bold;color:#111;transform:scaleX(1.148);">Percentage</span><span style="left:1411.0px;top:444.3px;font-size:13.52px;font-weight:bold;color:#111;transform:scaleX(1.041);">– B2B</span><span style="left:1523.8px;top:404.3px;font-size:13.52px;font-weight:bold;color:#111;transform:scaleX(1.139);">Average</span><span style="left:1523.8px;top:420.3px;font-size:13.52px;font-weight:bold;color:#111;transform:scaleX(1.140);">Offer</span><span style="left:1523.8px;top:436.3px;font-size:13.52px;font-weight:bold;color:#111;transform:scaleX(1.107);">Count</span><span style="left:42.6px;top:468.9px;font-size:13.52px;color:#111;transform:scaleX(1.108);">01/12/2020</span><span style="left:139.5px;top:468.9px;font-size:13.52px;color:#111;transform:scaleX(1.100);">€54,248.19</span><span style="left:245.6px;top:468.9px;font-size:13.52px;color:#111;transform:scaleX(1.100);">€826.47</span><span style="left:338.8px;top:468.9px;font-size:13.52px;color:#111;transform:scaleX(1.100);">1,907</span><span style="left:425.8px;top:468.9px;font-size:13.52px;color:#111;transform:scaleX(1.100);">27</span><span style="left:510.1px;top:468.9px;font-size:13.52px;color:#111;transform:scaleX(1.100);">1,887</span><span style="left:598.3px;top:468.9px;font-size:13.52px;color:#111;transform:scaleX(1.100);">28</span><span style="left:669.6px;top:468.9px;font-size:13.52px;color:#111;transform:scaleX(1.101);">€28.75</span><span style="left:758.9px;top:468.9px;font-size:13.52px;color:#111;transform:scaleX(1.101);">€29.52</span><span style="left:850.3px;top:468.9px;font-size:13.52px;color:#111;transform:scaleX(1.100);">1.01</span><span style="left:939.3px;top:468.9px;font-size:13.52px;color:#111;transform:scaleX(1.100);">0.96</span><span style="left:1030.4px;top:468.9px;font-size:13.52px;color:#111;transform:scaleX(1.101);">€28.45</span><span style="left:1116.4px;top:468.9px;font-size:13.52px;color:#111;transform:scaleX(1.101);">€30.61</span><span style="left:1205.9px;top:468.9px;font-size:13.52px;color:#111;transform:scaleX(1.101);">40,857</span><span style="left:1299.2px;top:468.9px;font-size:13.52px;color:#111;transform:scaleX(1.078);">4.62%</span><span style="left:1409.8px;top:468.9px;font-size:13.52px;color:#111;transform:scaleX(1.078);">0.07%</span><span style="left:1522.7px;top:468.9px;font-size:13.52px;color:#111;transform:scaleX(1.100);">845</span><span style="left:42.6px;top:501.9px;font-size:13.52px;color:#111;transform:scaleX(1.108);">01/01/2021</span><span style="left:139.5px;top:501.9px;font-size:13.52px;color:#111;transform:scaleX(1.100);">€42,185.57</span><span style="left:245.6px;top:501.9px;font-size:13.52px;color:#111;transform:scaleX(1.100);">€430.49</span><span style="left:338.8px;top:501.9px;font-size:13.52px;color:#111;transform:scaleX(1.100);">1,638</span><span style="left:425.8px;top:501.9px;font-size:13.52px;color:#111;transform:scaleX(1.100);">15</span><span style="left:510.1px;top:501.9px;font-size:13.52px;color:#111;transform:scaleX(1.100);">1,621</span><span style="left:598.3px;top:501.9px;font-size:13.52px;color:#111;transform:scaleX(1.100);">15</span><span style="left:669.6px;top:501.9px;font-size:13.52px;color:#111;transform:scaleX(1.101);">€26.02</span><span style="left:758.9px;top:501.9px;font-size:13.52px;color:#111;transform:scaleX(1.101);">€28.70</span><span style="left:850.3px;top:501.9px;font-size:13.52px;color:#111;transform:scaleX(1.100);">1.01</span><span style="left:939.3px;top:501.9px;font-size:13.52px;color:#111;transform:scaleX(1.100);">1.00</span><span style="left:1030.4px;top:501.9px;font-size:13.52px;color:#111;transform:scaleX(1.101);">€25.75</span><span style="left:1116.4px;top:501.9px;font-size:13.52px;color:#111;transform:scaleX(1.101);">€28.70</span><span style="left:1205.9px;top:501.9px;font-size:13.52px;color:#111;transform:scaleX(1.101);">33,407</span><span style="left:1299.2px;top:501.9px;font-size:13.52px;color:#111;transform:scaleX(1.078);">4.85%</span><span style="left:1409.8px;top:501.9px;font-size:13.52px;color:#111;transform:scaleX(1.078);">0.04%</span><span style="left:1522.7px;top:501.9px;font-size:13.52px;color:#111;transform:scaleX(1.100);">792</span><span style="left:42.6px;top:535.3px;font-size:13.52px;color:#111;transform:scaleX(1.108);">01/02/2021</span><span style="left:139.5px;top:535.3px;font-size:13.52px;color:#111;transform:scaleX(1.100);">€38,420.02</span><span style="left:245.6px;top:535.3px;font-size:13.52px;color:#111;transform:scaleX(1.100);">€424.60</span><span style="left:338.8px;top:535.3px;font-size:13.52px;color:#111;transform:scaleX(1.100);">1,431</span><span style="left:425.8px;top:535.3px;font-size:13.52px;color:#111;transform:scaleX(1.100);">14</span><span style="left:510.1px;top:535.3px;font-size:13.52px;color:#111;transform:scaleX(1.100);">1,413</span><span style="left:598.3px;top:535.3px;font-size:13.52px;color:#111;transform:scaleX(1.100);">14</span><span style="left:669.6px;top:535.3px;font-size:13.52px;color:#111;transform:scaleX(1.101);">€27.19</span><span style="left:758.9px;top:535.3px;font-size:13.52px;color:#111;transform:scaleX(1.101);">€30.33</span><span style="left:850.3px;top:535.3px;font-size:13.52px;color:#111;transform:scaleX(1.100);">1.01</span><span style="left:939.3px;top:535.3px;font-size:13.52px;color:#111;transform:scaleX(1.100);">1.00</span><span style="left:1030.4px;top:535.3px;font-size:13.52px;color:#111;transform:scaleX(1.101);">€26.85</span><span style="left:1116.4px;top:535.3px;font-size:13.52px;color:#111;transform:scaleX(1.101);">€30.33</span><span style="left:1205.9px;top:535.3px;font-size:13.52px;color:#111;transform:scaleX(1.101);">26,305</span><span style="left:1299.2px;top:535.3px;font-size:13.52px;color:#111;transform:scaleX(1.078);">5.37%</span><span style="left:1409.8px;top:535.3px;font-size:13.52px;color:#111;transform:scaleX(1.078);">0.05%</span><span style="left:1522.7px;top:535.3px;font-size:13.52px;color:#111;transform:scaleX(1.100);">844</span><span style="left:42.6px;top:568.7px;font-size:13.52px;color:#111;transform:scaleX(1.108);">01/03/2021</span><span style="left:139.5px;top:568.7px;font-size:13.52px;color:#111;transform:scaleX(1.100);">€44,988.80</span><span style="left:245.6px;top:568.7px;font-size:13.52px;color:#111;transform:scaleX(1.100);">€543.44</span><span style="left:338.8px;top:568.7px;font-size:13.52px;color:#111;transform:scaleX(1.100);">1,707</span><span style="left:425.8px;top:568.7px;font-size:13.52px;color:#111;transform:scaleX(1.100);">20</span><span style="left:510.1px;top:568.7px;font-size:13.52px;color:#111;transform:scaleX(1.100);">1,695</span><span style="left:598.3px;top:568.7px;font-size:13.52px;color:#111;transform:scaleX(1.100);">20</span><span style="left:669.6px;top:568.7px;font-size:13.52px;color:#111;transform:scaleX(1.101);">€26.54</span><span style="left:758.9px;top:568.7px;font-size:13.52px;color:#111;transform:scaleX(1.101);">€27.17</span><span style="left:850.3px;top:568.7px;font-size:13.52px;color:#111;transform:scaleX(1.100);">1.01</span><span style="left:939.3px;top:568.7px;font-size:13.52px;color:#111;transform:scaleX(1.100);">1.00</span><span style="left:1030.4px;top:568.7px;font-size:13.52px;color:#111;transform:scaleX(1.101);">€26.36</span><span style="left:1116.4px;top:568.7px;font-size:13.52px;color:#111;transform:scaleX(1.101);">€27.17</span><span style="left:1205.9px;top:568.7px;font-size:13.52px;color:#111;transform:scaleX(1.101);">26,718</span><span style="left:1299.2px;top:568.7px;font-size:13.52px;color:#111;transform:scaleX(1.078);">6.34%</span><span style="left:1409.8px;top:568.7px;font-size:13.52px;color:#111;transform:scaleX(1.078);">0.07%</span><span style="left:1522.7px;top:568.7px;font-size:13.52px;color:#111;transform:scaleX(1.100);">887</span><span style="left:42.6px;top:603.1px;font-size:13.52px;color:#111;transform:scaleX(1.108);">01/04/2021</span><span style="left:139.5px;top:603.1px;font-size:13.52px;color:#111;transform:scaleX(1.100);">€10,747.17</span><span style="left:245.6px;top:603.1px;font-size:13.52px;color:#111;transform:scaleX(1.101);">€23.99</span><span style="left:338.8px;top:603.1px;font-size:13.52px;color:#111;transform:scaleX(1.100);">396</span><span style="left:425.8px;top:603.1px;font-size:13.52px;color:#111;transform:scaleX(1.100);">1</span><span style="left:510.1px;top:603.1px;font-size:13.52px;color:#111;transform:scaleX(1.100);">386</span><span style="left:598.3px;top:603.1px;font-size:13.52px;color:#111;transform:scaleX(1.100);">1</span><span style="left:669.6px;top:603.1px;font-size:13.52px;color:#111;transform:scaleX(1.101);">€27.84</span><span style="left:758.9px;top:603.1px;font-size:13.52px;color:#111;transform:scaleX(1.101);">€23.99</span><span style="left:850.3px;top:603.1px;font-size:13.52px;color:#111;transform:scaleX(1.100);">1.03</span><span style="left:939.3px;top:603.1px;font-size:13.52px;color:#111;transform:scaleX(1.100);">1.00</span><span style="left:1030.4px;top:603.1px;font-size:13.52px;color:#111;transform:scaleX(1.101);">€27.14</span><span style="left:1116.4px;top:603.1px;font-size:13.52px;color:#111;transform:scaleX(1.101);">€23.99</span><span style="left:1205.9px;top:603.1px;font-size:13.52px;color:#111;transform:scaleX(1.100);">5,995</span><span style="left:1299.2px;top:603.1px;font-size:13.52px;color:#111;transform:scaleX(1.078);">6.44%</span><span style="left:1409.8px;top:603.1px;font-size:13.52px;color:#111;transform:scaleX(1.078);">0.02%</span><span style="left:1522.7px;top:603.1px;font-size:13.52px;color:#111;transform:scaleX(1.100);">880</span><span style="left:42.4px;top:655.1px;font-size:13.52px;font-weight:bold;color:#111;transform:scaleX(1.135);">Total</span><span style="left:135.5px;top:655.1px;font-size:13.52px;font-weight:bold;color:#111;transform:scaleX(1.215);">€376,279.16</span><span style="left:248.6px;top:655.1px;font-size:13.52px;font-weight:bold;color:#111;transform:scaleX(1.217);">€3,431.38</span><span style="left:343.1px;top:655.1px;font-size:13.52px;font-weight:bold;color:#111;transform:scaleX(1.217);">15,058.00</span><span style="left:437.2px;top:655.1px;font-size:13.52px;font-weight:bold;color:#111;transform:scaleX(1.214);">125.00</span><span style="left:520.5px;top:655.1px;font-size:13.52px;font-weight:bold;color:#111;transform:scaleX(1.217);">14,910.00</span><span style="left:614.5px;top:655.1px;font-size:13.52px;font-weight:bold;color:#111;transform:scaleX(1.214);">125.00</span><span style="left:685.2px;top:655.1px;font-size:13.52px;font-weight:bold;color:#111;transform:scaleX(1.214);">€25.24</span><span style="left:772.7px;top:655.1px;font-size:13.52px;font-weight:bold;color:#111;transform:scaleX(1.214);">€21.88</span><span style="left:861.5px;top:655.1px;font-size:13.52px;font-weight:bold;color:#111;transform:scaleX(1.219);">1.01</span><span style="left:946.6px;top:655.1px;font-size:13.52px;font-weight:bold;color:#111;transform:scaleX(1.219);">0.89</span><span style="left:1034.4px;top:655.1px;font-size:13.52px;font-weight:bold;color:#111;transform:scaleX(1.214);">€24.01</span><span style="left:1119.6px;top:655.1px;font-size:13.52px;font-weight:bold;color:#111;transform:scaleX(1.214);">€21.82</span><span style="left:1206.0px;top:655.1px;font-size:13.52px;font-weight:bold;color:#111;transform:scaleX(1.216);">275,167.00</span><span style="left:1309.8px;top:655.1px;font-size:13.52px;font-weight:bold;color:#111;transform:scaleX(1.177);">5.64%</span><span style="left:1416.8px;top:655.1px;font-size:13.52px;font-weight:bold;color:#111;transform:scaleX(1.177);">0.04%</span><span style="left:1524.5px;top:655.1px;font-size:13.52px;font-weight:bold;color:#111;transform:scaleX(1.214);">653.67</span>
</div>
</body></html>
